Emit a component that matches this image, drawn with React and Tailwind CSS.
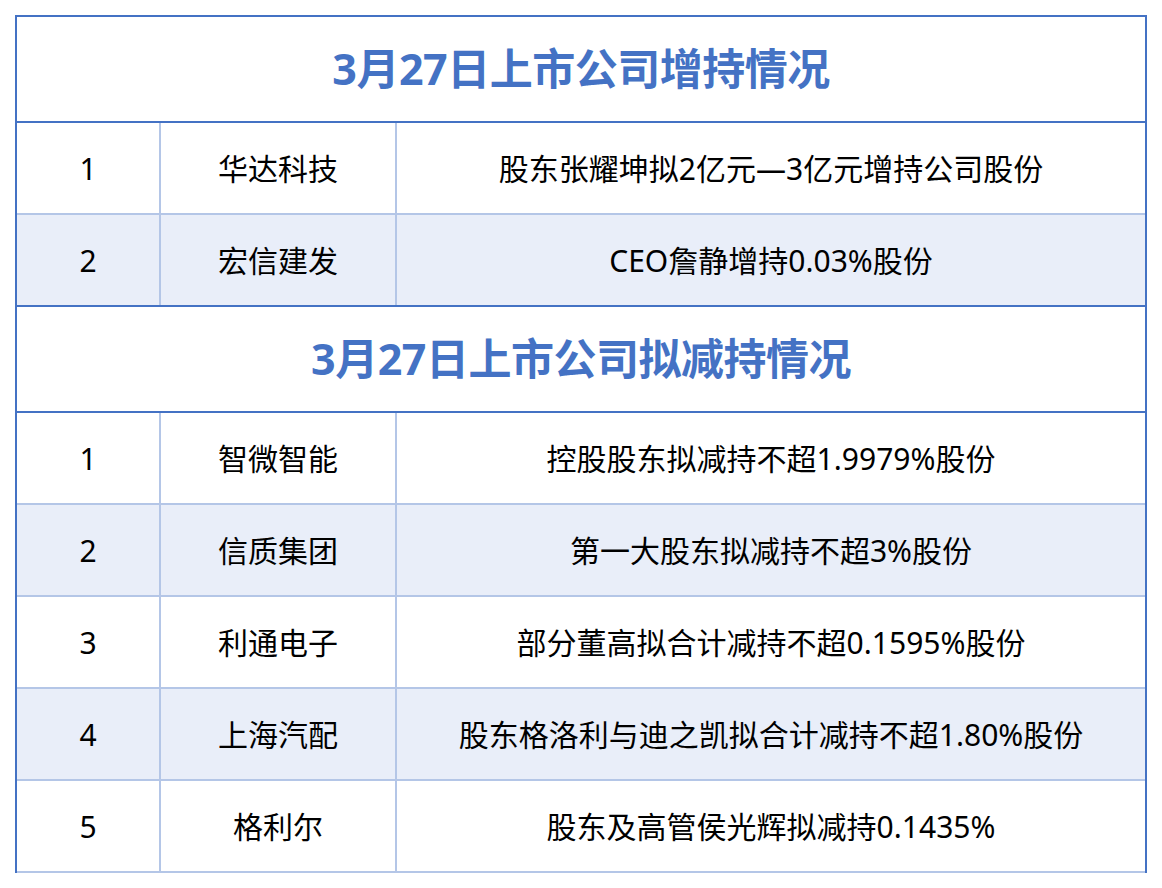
const increase = [
  { no: 1, name: "华达科技", detail: "股东张耀坤拟2亿元—3亿元增持公司股份" },
  { no: 2, name: "宏信建发", detail: "CEO詹静增持0.03%股份" },
];

const decrease = [
  { no: 1, name: "智微智能", detail: "控股股东拟减持不超1.9979%股份" },
  { no: 2, name: "信质集团", detail: "第一大股东拟减持不超3%股份" },
  { no: 3, name: "利通电子", detail: "部分董高拟合计减持不超0.1595%股份" },
  { no: 4, name: "上海汽配", detail: "股东格洛利与迪之凯拟合计减持不超1.80%股份" },
  { no: 5, name: "格利尔", detail: "股东及高管侯光辉拟减持0.1435%" },
];

function Title({ children }) {
  return (
    <div className="h-[106px] flex items-center justify-center border-b-2 border-[#4472c4]">
      <h2 className="text-[43px] font-bold text-[#4472c4] tracking-[-0.5px]">{children}</h2>
    </div>
  );
}

function Row({ row, index, last }) {
  const shaded = index % 2 === 1;
  return (
    <div
      className={`grid grid-cols-[144px_236px_1fr] h-[92px] border-b-2 ${
        last ? "border-[#4472c4]" : "border-[#b4c6e7]"
      } ${shaded ? "bg-[#e9eef9]" : "bg-white"}`}
    >
      <div className="flex items-center justify-center border-r-2 border-[#b4c6e7]">{row.no}</div>
      <div className="flex items-center justify-center border-r-2 border-[#b4c6e7]">{row.name}</div>
      <div className="flex items-center justify-center">{row.detail}</div>
    </div>
  );
}

export default function App() {
  return (
    <div className="min-h-[888px] bg-white pl-[15px] pt-[15px] font-['Noto_Sans','Noto_Sans_CJK_SC',sans-serif] text-[30px] text-black">
      <div className="w-[1132px] border-x-2 border-t-2 border-[#4472c4]">
        <Title>3月27日上市公司增持情况</Title>
        {increase.map((row, i) => (
          <Row key={row.no} row={row} index={i} last={i === increase.length - 1} />
        ))}
        <Title>3月27日上市公司拟减持情况</Title>
        {decrease.map((row, i) => (
          <Row key={row.no} row={row} index={i} last={false} />
        ))}
      </div>
    </div>
  );
}
